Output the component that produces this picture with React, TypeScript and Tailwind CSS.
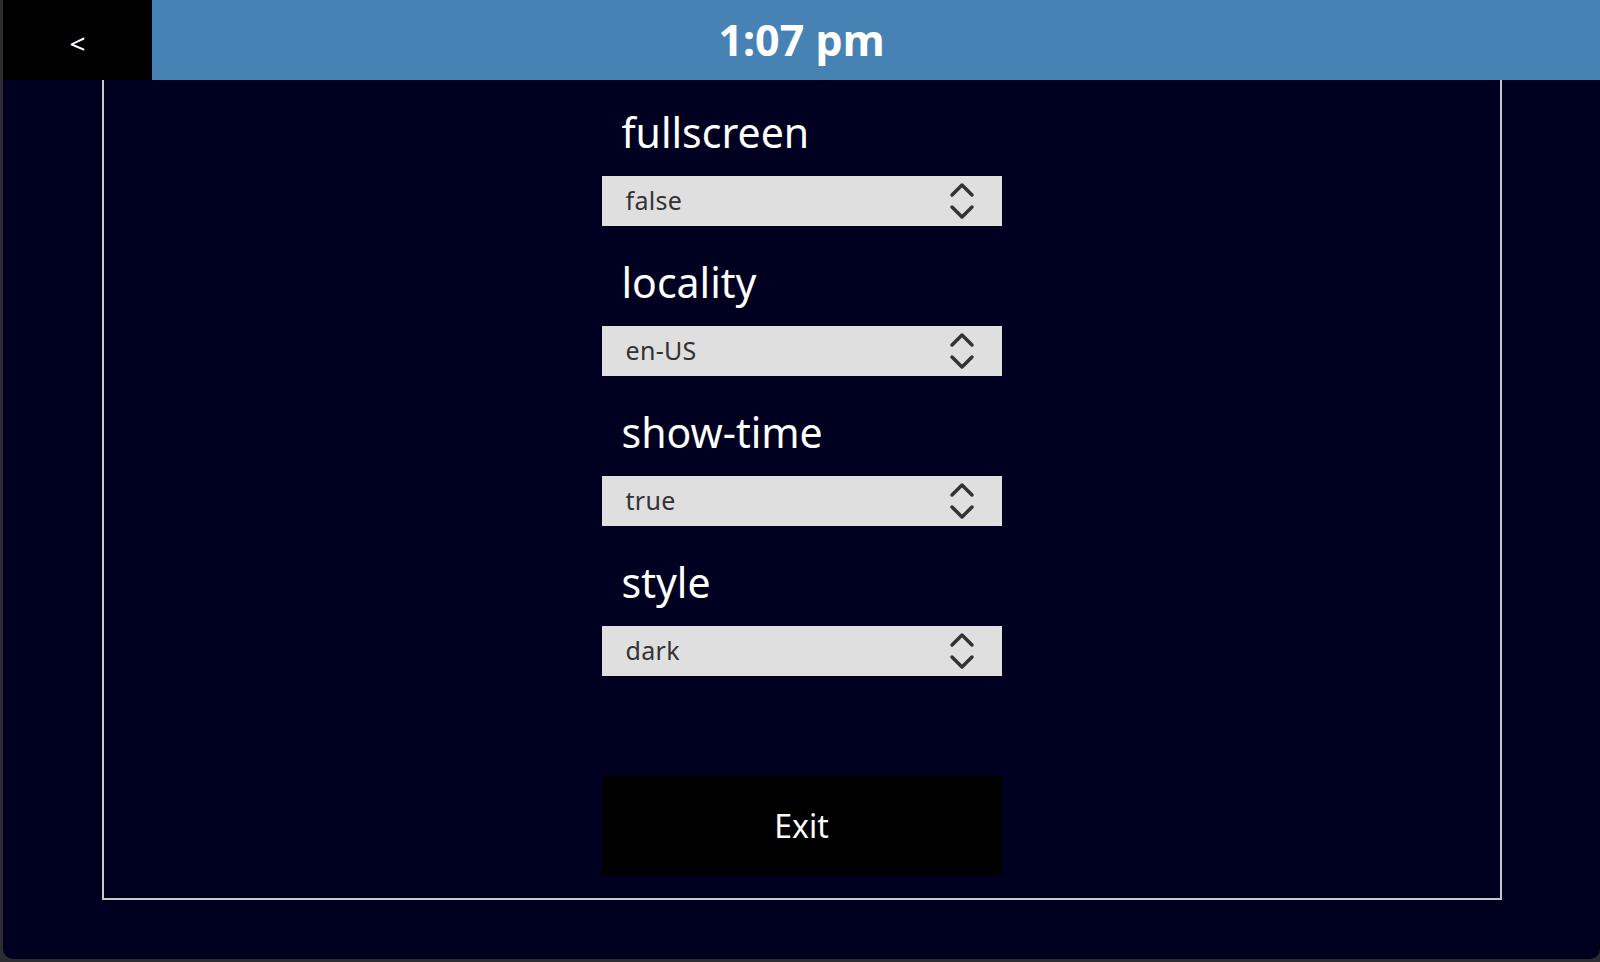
import React from "react";

const font = { fontFamily: '"Noto Sans", "Open Sans", sans-serif' };

function Chevrons() {
  return (
    <svg width="26" height="40" viewBox="0 0 26 40" fill="none" stroke="#333333" strokeWidth="3.5" strokeLinecap="round" strokeLinejoin="round">
      <path d="M3 14 L13 4 L23 14" />
      <path d="M3 26 L13 36 L23 26" />
    </svg>
  );
}

function Field({ label, value, first }: { label: string; value: string; first?: boolean }) {
  return (
    <div className="flex flex-col">
      <div className={`${first ? "h-[96px]" : "h-[100px]"} flex items-end pb-[24px] pl-[20px]`}>
        <span className="text-[41px] leading-[40px] text-white">{label}</span>
      </div>
      <div className="h-[50px] bg-[#dfdfdf] flex items-center justify-between pl-[24px] pr-[27px]">
        <span className="text-[25px] text-[#333333] tracking-[0.3px]">{value}</span>
        <Chevrons />
      </div>
    </div>
  );
}

export default function App() {
  return (
    <div className="w-[1600px] h-[962px] bg-[#2c2c31] pl-[3px] pb-[3px] overflow-hidden" style={font}>
      <div className="h-full bg-[#000020] rounded-b-[10px] flex flex-col overflow-hidden">
        <div className="h-[80px] flex shrink-0">
          <div className="w-[149px] bg-black flex items-center justify-center text-white text-[28px] leading-none pt-[5px]">&lt;</div>
          <div className="flex-1 bg-[#4682b4] flex items-center justify-center pr-[149px]">
            <span className="text-white text-[43px] font-bold leading-none pb-[1px]">1:07 pm</span>
          </div>
        </div>
        <div className="w-[1400px] mx-auto h-[820px] border-x-2 border-b-2 border-[#c8c8c8] flex justify-center">
          <div className="w-[400px] flex flex-col">
            <Field label="fullscreen" value="false" first />
            <Field label="locality" value="en-US" />
            <Field label="show-time" value="true" />
            <Field label="style" value="dark" />
            <button className="mt-[100px] h-[100px] bg-black text-white text-[32px] flex items-center justify-center">Exit</button>
          </div>
        </div>
      </div>
    </div>
  );
}
